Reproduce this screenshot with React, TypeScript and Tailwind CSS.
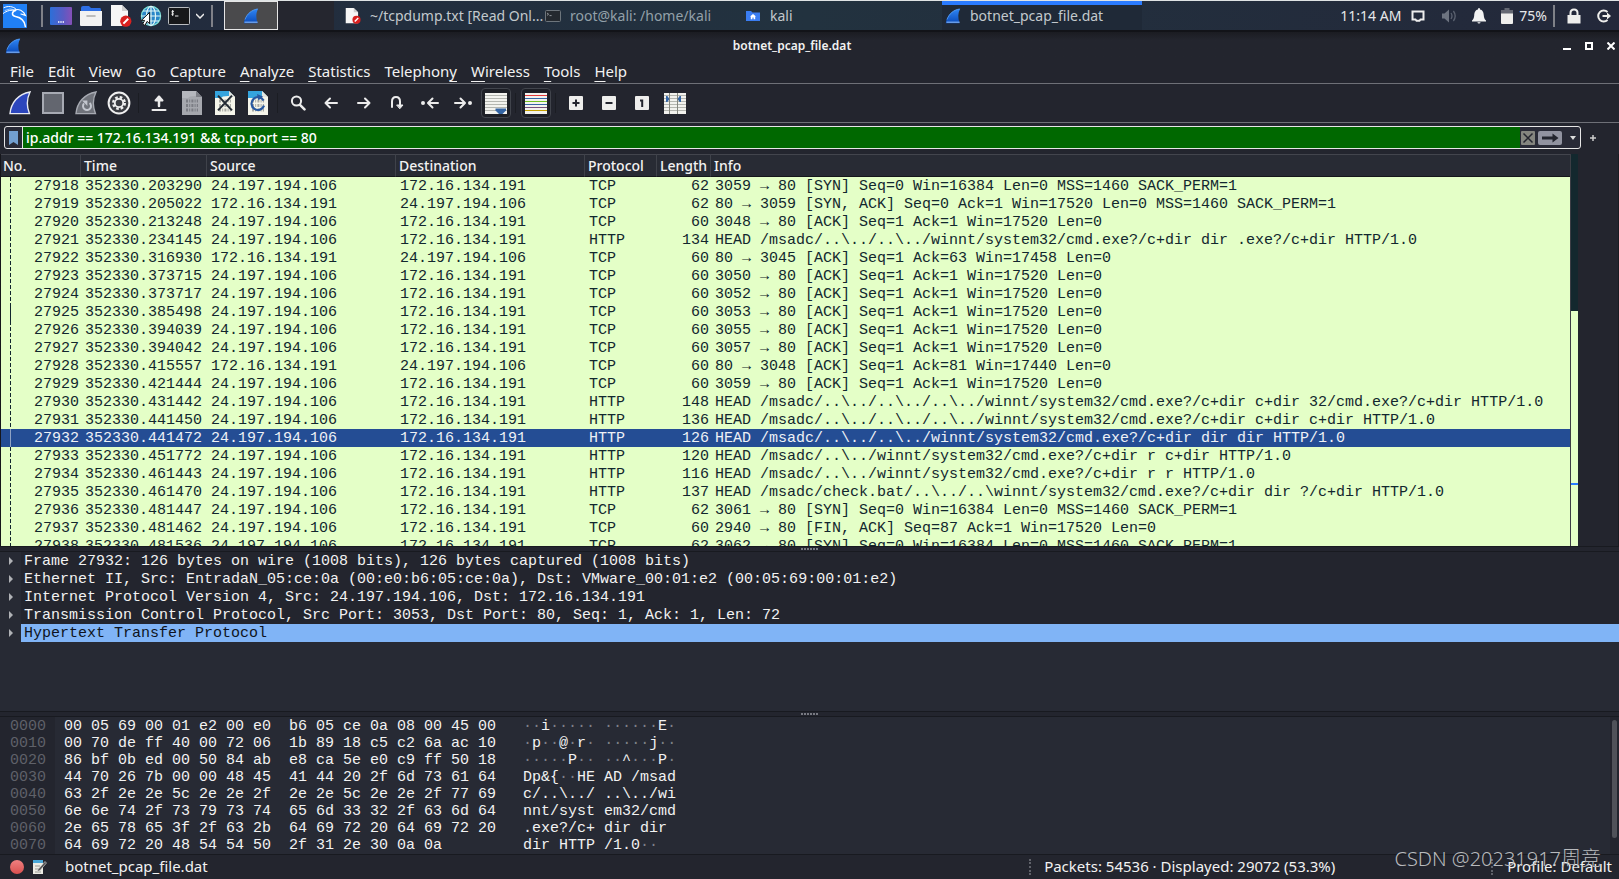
import type { ReactNode } from "react";

const EVEN = "24.197.194.106";
const HOST = "172.16.134.191";

type Packet = {
  no: number;
  time: string;
  src: string;
  protocol: string;
  length: number;
  info: string;
};

const p = (no: number, time: string, src: string, protocol: string, length: number, info: string): Packet => ({
  no,
  time,
  src,
  protocol,
  length,
  info,
});

const packets: Packet[] = [
  p(27918, "352330.203290", EVEN, "TCP", 62, "3059 → 80 [SYN] Seq=0 Win=16384 Len=0 MSS=1460 SACK_PERM=1"),
  p(27919, "352330.205022", HOST, "TCP", 62, "80 → 3059 [SYN, ACK] Seq=0 Ack=1 Win=17520 Len=0 MSS=1460 SACK_PERM=1"),
  p(27920, "352330.213248", EVEN, "TCP", 60, "3048 → 80 [ACK] Seq=1 Ack=1 Win=17520 Len=0"),
  p(27921, "352330.234145", EVEN, "HTTP", 134, "HEAD /msadc/..\\../..\\../winnt/system32/cmd.exe?/c+dir dir .exe?/c+dir HTTP/1.0"),
  p(27922, "352330.316930", HOST, "TCP", 60, "80 → 3045 [ACK] Seq=1 Ack=63 Win=17458 Len=0"),
  p(27923, "352330.373715", EVEN, "TCP", 60, "3050 → 80 [ACK] Seq=1 Ack=1 Win=17520 Len=0"),
  p(27924, "352330.373717", EVEN, "TCP", 60, "3052 → 80 [ACK] Seq=1 Ack=1 Win=17520 Len=0"),
  p(27925, "352330.385498", EVEN, "TCP", 60, "3053 → 80 [ACK] Seq=1 Ack=1 Win=17520 Len=0"),
  p(27926, "352330.394039", EVEN, "TCP", 60, "3055 → 80 [ACK] Seq=1 Ack=1 Win=17520 Len=0"),
  p(27927, "352330.394042", EVEN, "TCP", 60, "3057 → 80 [ACK] Seq=1 Ack=1 Win=17520 Len=0"),
  p(27928, "352330.415557", HOST, "TCP", 60, "80 → 3048 [ACK] Seq=1 Ack=81 Win=17440 Len=0"),
  p(27929, "352330.421444", EVEN, "TCP", 60, "3059 → 80 [ACK] Seq=1 Ack=1 Win=17520 Len=0"),
  p(27930, "352330.431442", EVEN, "HTTP", 148, "HEAD /msadc/..\\../..\\../..\\../winnt/system32/cmd.exe?/c+dir c+dir 32/cmd.exe?/c+dir HTTP/1.0"),
  p(27931, "352330.441450", EVEN, "HTTP", 136, "HEAD /msadc/..\\../..\\../..\\../winnt/system32/cmd.exe?/c+dir c+dir c+dir HTTP/1.0"),
  p(27932, "352330.441472", EVEN, "HTTP", 126, "HEAD /msadc/..\\../..\\../winnt/system32/cmd.exe?/c+dir dir dir HTTP/1.0"),
  p(27933, "352330.451772", EVEN, "HTTP", 120, "HEAD /msadc/..\\../winnt/system32/cmd.exe?/c+dir r c+dir HTTP/1.0"),
  p(27934, "352330.461443", EVEN, "HTTP", 116, "HEAD /msadc/..\\../winnt/system32/cmd.exe?/c+dir r r HTTP/1.0"),
  p(27935, "352330.461470", EVEN, "HTTP", 137, "HEAD /msadc/check.bat/..\\../..\\winnt/system32/cmd.exe?/c+dir dir ?/c+dir HTTP/1.0"),
  p(27936, "352330.481447", EVEN, "TCP", 62, "3061 → 80 [SYN] Seq=0 Win=16384 Len=0 MSS=1460 SACK_PERM=1"),
  p(27937, "352330.481462", EVEN, "TCP", 60, "2940 → 80 [FIN, ACK] Seq=87 Ack=1 Win=17520 Len=0"),
  p(27938, "352330.481536", EVEN, "TCP", 62, "3062 → 80 [SYN] Seq=0 Win=16384 Len=0 MSS=1460 SACK_PERM=1"),
];

const details = [
  "Frame 27932: 126 bytes on wire (1008 bits), 126 bytes captured (1008 bits)",
  "Ethernet II, Src: EntradaN_05:ce:0a (00:e0:b6:05:ce:0a), Dst: VMware_00:01:e2 (00:05:69:00:01:e2)",
  "Internet Protocol Version 4, Src: 24.197.194.106, Dst: 172.16.134.191",
  "Transmission Control Protocol, Src Port: 3053, Dst Port: 80, Seq: 1, Ack: 1, Len: 72",
  "Hypertext Transfer Protocol",
];

// "·" stands for a byte that has no printable character
const hexRows = [
  ["0000", "00 05 69 00 01 e2 00 e0  b6 05 ce 0a 08 00 45 00", "··i····· ······E·"],
  ["0010", "00 70 de ff 40 00 72 06  1b 89 18 c5 c2 6a ac 10", "·p··@·r· ·····j··"],
  ["0020", "86 bf 0b ed 00 50 84 ab  e8 ca 5e e0 c9 ff 50 18", "·····P·· ··^···P·"],
  ["0030", "44 70 26 7b 00 00 48 45  41 44 20 2f 6d 73 61 64", "Dp&{··HE AD /msad"],
  ["0040", "63 2f 2e 2e 5c 2e 2e 2f  2e 2e 5c 2e 2e 2f 77 69", "c/..\\../ ..\\../wi"],
  ["0050", "6e 6e 74 2f 73 79 73 74  65 6d 33 32 2f 63 6d 64", "nnt/syst em32/cmd"],
  ["0060", "2e 65 78 65 3f 2f 63 2b  64 69 72 20 64 69 72 20", ".exe?/c+ dir dir "],
  ["0070", "64 69 72 20 48 54 54 50  2f 31 2e 30 0a 0a", "dir HTTP /1.0··"],
];

const menus = [
  ["", "F", "ile"],
  ["", "E", "dit"],
  ["", "V", "iew"],
  ["", "G", "o"],
  ["", "C", "apture"],
  ["", "A", "nalyze"],
  ["", "S", "tatistics"],
  ["Telephon", "y", ""],
  ["", "W", "ireless"],
  ["", "T", "ools"],
  ["", "H", "elp"],
];

const Fin = ({ className }: { className: string }) => (
  <svg viewBox="0 0 16 16" className={className}>
    <defs>
      <linearGradient id="fin" x1="0" y1="0" x2="0" y2="1">
        <stop offset="0" stopColor="#2f86f5" />
        <stop offset="1" stopColor="#0a4ab8" />
      </linearGradient>
    </defs>
    <path d="M.8 15.2C2 7.5 7.4 1.6 15.2.8 12.8 5 12.8 9.6 14.6 15.2Z" fill="url(#fin)" />
    <path d="M1.5 14.2H14.6" stroke="#7fb0f2" strokeWidth="1.2" />
    <path d="M2 11.5C4.2 5.6 8.6 1.9 14.6 1" fill="none" stroke="#5ba2f8" strokeWidth=".8" />
  </svg>
);

const KaliLogo = () => (
  <svg viewBox="0 0 24 24" className="size-6">
    <rect width="24" height="24" fill="#2080f6" />
    <g fill="none" stroke="#fff" strokeLinecap="round">
      <path d="M1 3.6C5 1.8 10 2 13.4 5.4" strokeWidth="1" />
      <path d="M0 9.6C4 6.4 8.6 5.4 12.6 6.8" strokeWidth="1" />
      <path d="M2 6.400Q7 3.600 12 5.800" strokeWidth=".6" />
      <path d="M12.6 6C8.4 8 8.4 11.600 12.6 12.600 17.8 13.600 21.600 15.600 22.400 22.600" strokeWidth="1.500" />
      <path d="M12.6 6C15.600 4.600 18.400 6.200 20.800 8.600L22.400 11.400 18 10" strokeWidth="1.200" />
    </g>
  </svg>
);

const DeniedFile = ({ className }: { className: string }) => (
  <svg viewBox="0 0 22 22" className={className}>
    <path d="M1 0H12L18 6V21H1Z" fill="#f6f6f6" />
    <path d="M12 0V6H18Z" fill="#cfcfcf" />
    <circle cx="15.8" cy="16.2" r="5.6" fill="#d9201f" />
    <path d="M13.4 18.6 18.2 13.8" stroke="#fff" strokeWidth="2" />
  </svg>
);

const Desktop = () => (
  <svg viewBox="0 0 22 18" className="h-[18px] w-[22px]">
    <defs>
      <linearGradient id="desk">
        <stop offset="0" stopColor="#2c6fd8" />
        <stop offset=".6" stopColor="#5a5bc4" />
        <stop offset="1" stopColor="#8550b8" />
      </linearGradient>
    </defs>
    <rect width="22" height="18" rx="1" fill="url(#desk)" />
    <path d="M8 15H14" stroke="#fff" strokeWidth="1.4" strokeDasharray="1.4 .9" />
  </svg>
);

const Folder = () => (
  <svg viewBox="0 0 22 20" className="h-5 w-[22px]">
    <path d="M1 2Q1 0 3 0H9L11 2H20Q21 2 21 4V10H1Z" fill="#2d6fe6" />
    <path d="M0 5H22V19Q22 20 21 20H1Q0 20 0 19Z" fill="#f2f2f2" />
    <path d="M7 10H15" stroke="#aaa" strokeWidth="1.6" strokeLinecap="round" />
  </svg>
);

const Globe = () => (
  <svg viewBox="0 0 22 22" className="size-[22px]">
    <circle cx="11" cy="11" r="10" fill="#2a86c8" />
    <g fill="none" stroke="#dff6f6" strokeWidth="1.2">
      <circle cx="11" cy="11" r="9.6" stroke="#7fe0d4" />
      <ellipse cx="11" cy="11" rx="4.6" ry="9.6" />
      <path d="M11 1V21M1.4 11H20.6M3 6H19M3 16H19" />
    </g>
    <path d="M9.6 7.4V18.6L7 16.4 5 20.4 2.6 19.2 4.6 15.4H1.4Z" fill="#fff" stroke="#111" strokeWidth="1" />
  </svg>
);

const Terminal = () => (
  <svg viewBox="0 0 22 18" className="h-[18px] w-[22px]">
    <rect x=".5" y=".5" width="21" height="17" rx="1" fill="#17181a" stroke="#b9bcc0" />
    <path d="M6 4.6C4 3.6 3 5 4.4 5.8S6 8 3.4 7.2M4.7 3V9M7 9H10.4" fill="none" stroke="#fff" strokeWidth=".9" />
  </svg>
);

const SmallTerminal = () => (
  <svg viewBox="0 0 16 12" className="h-3 w-4">
    <rect x=".5" y=".5" width="15" height="11" rx="1" fill="#24292f" stroke="#6d757c" />
    <path d="M2 3 3.6 4.2 2 5.4M4.5 5.6H6.6" fill="none" stroke="#aab0b5" strokeWidth=".8" />
  </svg>
);

const HomeFolder = () => (
  <svg viewBox="0 0 16 12" className="h-3 w-4">
    <path d="M1 1H6L7.5 2.4H15V11H1Z" fill="#3a7df2" />
    <path d="M8 4 11 6.6H10.2V9.2H8.6V7.6H7.4V9.2H5.8V6.6H5Z" fill="#fff" />
  </svg>
);

const CaptureFin = ({ restart }: { restart?: boolean }) => (
  <svg viewBox="0 0 22 24" className="h-6 w-[22px]">
    <path
      d="M1 22.6C2 12 9 3 21 1 17.6 8 17.4 15 20.4 22.6Z"
      fill={restart ? "#70737b" : "#2c46bd"}
      stroke={restart ? "#a7aab2" : "#e8eaf2"}
      strokeWidth="1.4"
    />
    {restart && (
      <g>
        <path d="M9 12.4A4 4 0 1 0 14.6 12" fill="none" stroke="#c3c6ce" strokeWidth="2" />
        <path d="M7 9.6H12.400V15Z" fill="#c3c6ce" />
      </g>
    )}
  </svg>
);

const FileIcon = ({ kind }: { kind: "save" | "close" | "reload" }) => {
  const muted = kind === "save";
  return (
    <svg viewBox="0 0 20 24" className="h-6 w-5">
      <path d="M0 0H14L20 6V24H0Z" fill={muted ? "#a6a8ae" : "#f5f5ea"} />
      <path d="M0 0H14L18 4.6 13 5 8 5.4 6 7H0Z" fill={muted ? "#b5b7bd" : "#35a4dd"} />
      <path d="M14 0V6H20Z" fill={muted ? "#7c7e85" : "#e4e6e0"} />
      <path
        d="M4 10H16M4 14.5H16M4 19H16"
        stroke={muted ? "#7b7d84" : "#a9aaa4"}
        strokeWidth="3"
        strokeDasharray="2 1.2 1 1.2"
      />
      {kind === "close" && <path d="M3 4.6 17 19.4M17 4.6 3 19.4" stroke="#222a33" strokeWidth="2" />}
      {kind === "reload" && (
        <g>
          <path d="M15.6 9.6A6.4 6.4 0 1 0 16 14.6" fill="none" stroke="#2758a0" strokeWidth="2.2" />
          <path d="M9 3 15 5.4 10.4 9.4Z" fill="#2758a0" />
        </g>
      )}
    </svg>
  );
};

const Gear = () => (
  <svg viewBox="0 0 24 24" className="size-6">
    <circle cx="12" cy="12" r="10.4" fill="#3a3c42" stroke="#f0f0f0" strokeWidth="2" />
    <circle cx="12" cy="12" r="5.8" fill="none" stroke="#f0f0f0" strokeWidth="2.4" strokeDasharray="2.6 1.955" />
    <circle cx="12" cy="12" r="4.2" fill="none" stroke="#f0f0f0" strokeWidth="1.8" />
  </svg>
);

const Line = ({ children, w = 16 }: { children: ReactNode; w?: number }) => (
  <svg
    width={w}
    height="16"
    viewBox={`0 0 ${w} 16`}
    fill="none"
    stroke="#ececec"
    strokeWidth="2"
    strokeLinecap="round"
    strokeLinejoin="round"
  >
    {children}
  </svg>
);

const Boxed = ({ d }: { d: string }) => (
  <svg viewBox="0 0 14 14" className="size-[14px]">
    <rect width="14" height="14" rx="1" fill="#eeeeec" />
    <path d={d} fill="none" stroke="#23252e" strokeWidth="2" />
  </svg>
);

const Lines = ({ colors, marker }: { colors: string[]; marker?: boolean }) => (
  <svg viewBox="0 0 22 21" className="h-[21px] w-[22px]">
    <rect width="22" height="21" fill="#f2f2ee" />
    {colors.map((c, i) => (
      <path key={i} d={`M0 ${2.5 + i * 3}H22`} stroke={c} strokeWidth="1" />
    ))}
    {marker && <path d="M10.5 15.5H21V17.5L17.5 21H14L10.5 17.5Z" fill="#3465a4" />}
  </svg>
);

const Columns = () => (
  <svg viewBox="0 0 22 21" className="h-[21px] w-[22px]">
    <rect width="22" height="21" fill="#f2f2ee" />
    <path d="M0 2.5H22M0 5.5H22M0 8.5H22M0 11.5H22M0 14.5H22M0 17.5H22" stroke="#b4b6b0" />
    <path d="M5.5 0V21M13.5 0V21" stroke="#85877f" />
    <path d="M2 3H3.4L5.4 6 3.4 9H2ZM17 3H15.6L13.6 6 15.6 9H17Z" fill="#3465a4" />
  </svg>
);

const ToolButton = ({ label, active, children }: { label: string; active?: boolean; children: ReactNode }) => (
  <div className="flex w-[33px] justify-center">
    <button
      aria-label={label}
      className={
        active
          ? "flex h-[30px] w-[30px] items-center justify-center rounded border border-[#41444c] bg-[#1d1f26]"
          : "flex h-[30px] w-[30px] items-center justify-center"
      }
    >
      {children}
    </button>
  </div>
);

const ToolSep = () => (
  <div className="flex w-[7px] justify-center">
    <div className="h-5 w-px bg-[#1b1d23]" />
  </div>
);

const Task = ({ icon, title, className }: { icon: ReactNode; title: string; className: string }) => (
  <button className={`flex w-[200px] items-center gap-[9px] border-t-4 pl-[3px] text-left whitespace-nowrap ${className}`}>
    <span className="mb-1 shrink-0">{icon}</span>
    <span className="mb-1">{title}</span>
  </button>
);

const Taskbar = () => (
  <header className="flex h-8 shrink-0 items-stretch border-t border-b-2 border-t-[#dfe3e4] border-b-[#121318] bg-linear-to-r from-[#222a3d] via-[#22323f] to-[#23283a] text-sm text-[#e6e8ea]">
    <div className="flex items-center pl-[3px]">
      <button aria-label="Applications">
        <KaliLogo />
      </button>
      <div className="ml-[14px] h-[22px] w-[2px] bg-[#7f8188]" />
      <div className="ml-[7px] flex items-center gap-2">
        <button aria-label="Show desktop"><Desktop /></button>
        <button aria-label="Files"><Folder /></button>
        <button aria-label="Text editor"><DeniedFile className="size-[22px]" /></button>
        <button aria-label="Browser"><Globe /></button>
      </div>
      <button aria-label="Terminal" className="ml-1.5"><Terminal /></button>
      <button aria-label="More terminals" className="ml-1.5">
        <svg viewBox="0 0 8 6" className="h-1.5 w-2">
          <path d="M0 1 4 5 8 1" fill="none" stroke="#eee" strokeWidth="1.5" />
        </svg>
      </button>
      <div className="ml-[7px] h-[22px] w-[2px] bg-[#7f8188]" />
    </div>
    <button aria-label="Wireshark" className="ml-[11px] flex w-[54px] items-center justify-center border border-[#e6e6e6] bg-[#4a4a4c]">
      <Fin className="size-4" />
    </button>
    <div className="w-[56px] bg-[#25262f]" />
    <nav className="flex pl-2">
      <Task icon={<DeniedFile className="size-4" />} title="~/tcpdump.txt [Read Onl..." className="border-transparent text-[#c3c9cd]" />
      <Task icon={<SmallTerminal />} title="root@kali: /home/kali" className="border-transparent text-[#93a0a9]" />
      <Task icon={<HomeFolder />} title="kali" className="border-transparent text-[#c3c9cd]" />
      <Task icon={<Fin className="size-4" />} title="botnet_pcap_file.dat" className="border-[#2a7bff] bg-[#1f2937] text-[#c3c9cd]" />
    </nav>
    <div className="ml-auto flex items-center pr-[7px]">
      <span>11:14 AM</span>
      <svg viewBox="0 0 14 14" className="ml-2.5 size-[14px]">
        <path d="M1.5 2.5H12.5V10.5H9.5L8.5 11.8H5.5L4.5 10.5H1.5Z" fill="none" stroke="#eee" strokeWidth="2" />
      </svg>
      <svg viewBox="0 0 16 16" className="ml-4 size-4">
        <path d="M1 5.5H3.5L8 1.5V14.5L3.5 10.5H1Z" fill="#6d7480" />
        <path d="M10 5Q12 8 10 11M12.4 3Q16 8 12.4 13" fill="none" stroke="#5b6270" strokeWidth="1.3" />
      </svg>
      <svg viewBox="0 0 14 16" className="ml-[15px] h-4 w-[14px]">
        <path d="M7 0Q8 0 8 1.4C11 2 11.6 4.6 11.8 7.6 12 10 12.4 11 14 12.6V13.4H0V12.6C1.6 11 2 10 2.2 7.6 2.4 4.6 3 2 6 1.4Q6 0 7 0ZM5.4 14.2H8.6Q8.4 15.6 7 15.6T5.4 14.2Z" fill="#f3f3f3" />
      </svg>
      <svg viewBox="0 0 12 16" className="ml-[15px] h-4 w-3">
        <path d="M3.5 0H8.5V2H12V6H0V2H3.5Z" fill="#646873" />
        <path d="M0 5.5H12V15Q12 16 11 16H1Q0 16 0 15Z" fill="#eeeeec" />
      </svg>
      <span className="ml-1.5">75%</span>
      <div className="ml-1.5 h-[22px] w-[2px] bg-[#7f8188]" />
      <svg viewBox="0 0 14 16" className="ml-3 h-4 w-[14px]">
        <path d="M3.5 8V5Q3.5 1.5 7 1.5T10.5 5V8" fill="none" stroke="#eeeeec" strokeWidth="2" />
        <path d="M.5 7H13.5V15.5H.5Z" fill="#eeeeec" />
      </svg>
      <svg viewBox="0 0 16 16" className="ml-[15px] size-4">
        <path d="M11.5 4A5.5 5.5 0 1 0 11.5 12" fill="none" stroke="#eeeeec" strokeWidth="2" />
        <path d="M6.5 8H12" stroke="#eeeeec" strokeWidth="2" />
        <path d="M11 4.600 15 8 11 11.400Z" fill="#eeeeec" />
      </svg>
    </div>
  </header>
);

const TitleBar = () => (
  <div className="flex h-[27px] shrink-0 items-center bg-linear-to-b from-[#1b1c22] to-[#23252e] to-30% pr-1 pl-[5px]">
    <Fin className="size-4" />
    <h1 className="flex-1 text-center text-xs font-semibold">botnet_pcap_file.dat</h1>
    <div className="flex justify-end gap-[14px]">
      <button aria-label="Minimize">
        <svg viewBox="0 0 8 8" className="size-2"><path d="M0 7H8" stroke="#fff" strokeWidth="2" /></svg>
      </button>
      <button aria-label="Maximize">
        <svg viewBox="0 0 8 8" className="size-2"><path d="M1 1H7V7H1Z" fill="none" stroke="#fff" strokeWidth="2" /></svg>
      </button>
      <button aria-label="Close">
        <svg viewBox="0 0 8 8" className="size-2"><path d="M.5 .5 7.5 7.5M7.5 .5 .5 7.5" stroke="#fff" strokeWidth="2" /></svg>
      </button>
    </div>
  </div>
);

const MenuBar = () => (
  <nav className="flex h-6 shrink-0 items-center gap-[14px] pl-[10px] text-[15px]">
    {menus.map(([before, key, after]) => (
      <button key={before + key}>
        {before}
        <span className="underline underline-offset-4">{key}</span>
        {after}
      </button>
    ))}
  </nav>
);

const gray = ["#b4b6b0", "#b4b6b0", "#b4b6b0", "#b4b6b0", "#b4b6b0", "#b4b6b0"];
const rainbow = ["#e33b3b", "#3465a4", "#73c020", "#3465a4", "#75507b", "#c4a000"];

const Toolbar = () => (
  <div className="flex h-10 shrink-0 items-center border-t border-b border-[#6e7077] pl-[3px]">
    <ToolButton label="Start capture"><CaptureFin /></ToolButton>
    <ToolButton label="Stop capture">
      <svg viewBox="0 0 22 22" className="size-[22px]">
        <path d="M1 1H21V21H1Z" fill="#63666f" stroke="#a7aab3" strokeWidth="2" />
      </svg>
    </ToolButton>
    <ToolButton label="Restart capture"><CaptureFin restart /></ToolButton>
    <ToolButton label="Capture options"><Gear /></ToolButton>
    <ToolSep />
    <ToolButton label="Open file">
      <Line>
        <path d="M8 2V11" strokeWidth="2.5" />
        <path d="M4.5 5.5 8 1.500 11.5 5.5Z" fill="#ececec" />
        <path d="M1.5 15H14.5" />
      </Line>
    </ToolButton>
    <ToolButton label="Save file"><FileIcon kind="save" /></ToolButton>
    <ToolButton label="Close file"><FileIcon kind="close" /></ToolButton>
    <ToolButton label="Reload file"><FileIcon kind="reload" /></ToolButton>
    <ToolSep />
    <ToolButton label="Find packet">
      <Line><circle cx="6.5" cy="6" r="4.6" /><path d="M10 9.8 14.5 14.4" strokeWidth="2.5" /></Line>
    </ToolButton>
    <ToolButton label="Previous packet"><Line><path d="M14 8H2.5M7 3.5 2.5 8 7 12.5" /></Line></ToolButton>
    <ToolButton label="Next packet"><Line><path d="M2 8H13.5M9 3.5 13.5 8 9 12.5" /></Line></ToolButton>
    <ToolButton label="Go to packet">
      <Line><path d="M3 12V6.5Q3 2 7 2T11 6.5V11" /><path d="M8 10H14L11 13.500Z" fill="#ececec" strokeWidth="1" /></Line>
    </ToolButton>
    <ToolButton label="First packet">
      <Line w={18}><path d="M17 8H7.5M11.5 3.5 7 8 11.5 12.5" /><circle cx="2" cy="8" r="1" /></Line>
    </ToolButton>
    <ToolButton label="Last packet">
      <Line w={18}><path d="M1 8H10.5M6.5 3.5 11 8 6.5 12.5" /><circle cx="16" cy="8" r="1" /></Line>
    </ToolButton>
    <ToolButton label="Auto scroll" active><Lines colors={gray} marker /></ToolButton>
    <ToolSep />
    <ToolButton label="Colorize" active><Lines colors={rainbow} /></ToolButton>
    <ToolSep />
    <ToolButton label="Zoom in"><Boxed d="M3.5 7H10.5M7 3.5V10.5" /></ToolButton>
    <ToolButton label="Zoom out"><Boxed d="M3.5 7H10.5" /></ToolButton>
    <ToolButton label="Normal size"><Boxed d="M5 4.5H7.2V11" /></ToolButton>
    <ToolButton label="Resize columns"><Columns /></ToolButton>
  </div>
);

const FilterBar = () => (
  <div className="flex shrink-0 items-center pt-[3px] pr-[26px] pb-[5px] pl-1">
    <div className="flex h-[23px] flex-1 items-center rounded-[3px] border border-[#e6e6e6] bg-[#282a36]">
      <button aria-label="Filter bookmarks" className="flex w-[17px] justify-center">
        <svg viewBox="0 0 9 14" className="h-[14px] w-[9px]"><path d="M0 0H9V14L4.5 11 0 14Z" fill="#729fcf" /></svg>
      </button>
      <input
        aria-label="Display filter"
        defaultValue="ip.addr == 172.16.134.191 && tcp.port == 80"
        className="h-full min-w-0 flex-1 border-l border-[#e6e6e6] bg-[#006800] pl-[3px] text-sm font-medium text-white outline-none"
      />
      <button aria-label="Clear filter" className="ml-px">
        <svg viewBox="0 0 14 14" className="size-[14px]">
          <rect width="14" height="14" rx="1" fill="#84857f" />
          <path d="M2.5 2.5 11.5 11.5M11.5 2.5 2.5 11.5" stroke="#23252e" strokeWidth="1.5" />
        </svg>
      </button>
      <button aria-label="Apply filter" className="ml-[3px]">
        <svg viewBox="0 0 24 14" className="h-[14px] w-6">
          <rect width="24" height="14" rx="2" fill="#9193a0" />
          <path d="M4 7H16" stroke="#23252e" strokeWidth="3" />
          <path d="M14.5 2.5 20.5 7 14.5 11.5Z" fill="#23252e" />
        </svg>
      </button>
      <button aria-label="Recent filters" className="mr-1 ml-2">
        <svg viewBox="0 0 6 4" className="h-1 w-1.5"><path d="M0 0H6L3 4Z" fill="#ddd" /></svg>
      </button>
    </div>
    <button aria-label="Add filter button" className="ml-2">
      <svg viewBox="0 0 8 8" className="-mr-1 size-2"><path d="M4 1V7M1 4H7" stroke="#ccc" strokeWidth="1.5" /></svg>
    </button>
  </div>
);

const Relation = ({ no }: { no: number }) => {
  let line = "bg-[repeating-linear-gradient(to_bottom,#12272e_0_4px,transparent_4px_6px)]";
  if (no === 27925) line = "bg-[#12272e]";
  if (no === 27932) line = "bg-[#8fa3c4]";
  return <span className={`absolute top-0 left-[9px] h-full w-px ${line}`} />;
};

const headers = ["Time", "Source", "Destination", "Protocol", "Length", "Info"];

const PacketList = () => (
  <section className="flex min-h-0 flex-1">
    <div className="min-w-0 flex-1 overflow-hidden border-r border-l border-r-[#3c3e45] border-l-[#15161b]">
      <table className="w-full table-fixed border-separate border-spacing-0">
        <colgroup>
          <col className="w-[79px]" />
          <col className="w-[126px]" />
          <col className="w-[189px]" />
          <col className="w-[189px]" />
          <col className="w-[72px]" />
          <col className="w-[54px]" />
          <col />
        </colgroup>
        <thead>
          <tr className="h-[23px] bg-[#282b34] text-left text-sm">
            <th className="border-t border-b border-t-[#43454d] border-b-[#15161b] p-0 pl-[2px] font-medium">No.</th>
            {headers.map((h) => (
              <th key={h} className="border-t border-b border-l border-t-[#43454d] border-b-[#15161b] border-l-[#3f424a] p-0 pl-[3px] font-medium">
                {h}
              </th>
            ))}
          </tr>
        </thead>
        <tbody className="font-['Liberation_Mono',monospace] text-[15px] leading-4 whitespace-pre">
          {packets.map((row) => (
            <tr
              key={row.no}
              className={row.no === 27932 ? "h-[18px] bg-[#244d94] text-[#eef1f6]" : "h-[18px] bg-[#e4ffc7] text-[#12272e]"}
            >
              <td className="relative p-0 pt-[2px] pr-px text-right">
                <Relation no={row.no} />
                {row.no}
              </td>
              <td className="p-0 pt-[2px] pl-[5px]">{row.time}</td>
              <td className="p-0 pt-[2px] pl-[5px]">{row.src}</td>
              <td className="p-0 pt-[2px] pl-[5px]">{row.src === HOST ? EVEN : HOST}</td>
              <td className="p-0 pt-[2px] pl-[5px]">{row.protocol}</td>
              <td className="p-0 pt-[2px] pr-px text-right">{row.length}</td>
              <td className="p-0 pt-[2px] pl-[5px]">{row.info}</td>
            </tr>
          ))}
        </tbody>
      </table>
    </div>
    <div className="flex w-[7px] flex-col">
      <div className="h-2/5 bg-[#13282e]" />
      <div className="h-[44%] bg-[#e4ffc7]" />
      <div className="h-[2px] bg-[#2a7bff]" />
      <div className="flex-1 bg-[#e4ffc7]" />
    </div>
    <div className="w-[41px] border-r border-[#1a1c22]" />
  </section>
);

const Splitter = () => (
  <div className="flex h-[6px] shrink-0 items-center justify-center gap-px border-t border-b border-[#181a20]">
    {[0, 1, 2, 3, 4, 5].map((i) => (
      <div key={i} className="size-[2px] bg-[#777981]" />
    ))}
  </div>
);

const Details = () => (
  <section className="h-[159px] shrink-0 bg-[#272a34] font-['Liberation_Mono',monospace] text-[15px] leading-4 whitespace-pre">
    {details.map((text, i) => (
      <button key={text} className="flex h-[18px] w-full text-left">
        <span className="flex h-full w-[21px] items-center justify-center">
          <svg viewBox="0 0 4 8" className="h-2 w-1"><path d="M0 0 4 4 0 8Z" fill="#b0b2b6" /></svg>
        </span>
        <span className={i === 4 ? "h-full flex-1 bg-[#80b4f6] pt-[2px] pl-[3px] text-[#0e1320]" : "h-full flex-1 bg-[#23252e] pt-[2px] pl-[3px]"}>
          {text}
        </span>
      </button>
    ))}
  </section>
);

const HexDump = () => (
  <section className="flex shrink-0 bg-[#272a34] font-['Liberation_Mono',monospace] text-[15px] leading-[17px] whitespace-pre">
    <div className="w-[55px] bg-[#23252e] pt-px pl-[10px] text-[#5f6169]">
      {hexRows.map(([offset]) => (
        <div key={offset}>{offset}</div>
      ))}
    </div>
    <div className="w-[459px] pt-px pl-[9px]">
      {hexRows.map(([offset, bytes]) => (
        <div key={offset}>{bytes}</div>
      ))}
    </div>
    <div className="flex-1 pt-px pl-[9px]">
      {hexRows.map(([offset, , ascii]) => (
        <div key={offset}>
          {ascii.split(/(·+)/).map((part, i) => (
            <span key={i} className={part.startsWith("·") ? "text-[#7d8087]" : ""}>{part}</span>
          ))}
        </div>
      ))}
    </div>
    <div className="w-[9px] bg-[#23252e] px-[2px] pt-[3px] pb-4">
      <div className="h-full rounded-full bg-[#505259]" />
    </div>
  </section>
);

const Grip = () => <div className="h-4 border-l-2 border-dotted border-[#60626a]" />;

const StatusBar = () => (
  <footer className="relative flex h-[25px] shrink-0 items-center border-t border-[#181a20] pr-[7px] pb-px pl-[10px] text-[15px]">
    <button aria-label="Expert information" className="size-[14px] rounded-full bg-linear-to-b from-[#ef8080] to-[#d94f4f]" />
    <button aria-label="Capture comment" className="ml-[9px]">
      <svg viewBox="0 0 14 14" className="size-[14px]">
        <path d="M0 0H10V14H0Z" fill="#ecece4" />
        <path d="M0 0H10V3H0Z" fill="#4aa8d8" />
        <path d="M2 6H7M2 9H8M2 12H8" stroke="#9a9b96" />
        <path d="M5 9.5 12 1.5 13.5 3 7 10.5 4.5 11.5Z" fill="#555" stroke="#ddd" strokeWidth=".6" />
      </svg>
    </button>
    <span className="ml-[18px] flex-1">botnet_pcap_file.dat</span>
    <div className="flex w-[462px] items-center gap-[13px]">
      <Grip />
      <span>Packets: 54536 · Displayed: 29072 (53.3%)</span>
    </div>
    <div className="flex items-center gap-[14px]">
      <Grip />
      <span>Profile: Default</span>
    </div>
    <span className="absolute right-[18px] bottom-2 font-['Noto_Sans','Noto_Sans_CJK_SC',sans-serif] text-xl leading-6 font-light text-[#b8babd]">
      CSDN @20231917周竞
    </span>
  </footer>
);

const App = () => {
  return (
    <div className="flex h-screen flex-col overflow-hidden bg-[#23252e] font-['Noto_Sans',sans-serif] text-[#f2f2f2]">
      <Taskbar />
      <TitleBar />
      <MenuBar />
      <Toolbar />
      <FilterBar />
      <PacketList />
      <Splitter />
      <Details />
      <Splitter />
      <HexDump />
      <StatusBar />
    </div>
  );
};

export default App;
